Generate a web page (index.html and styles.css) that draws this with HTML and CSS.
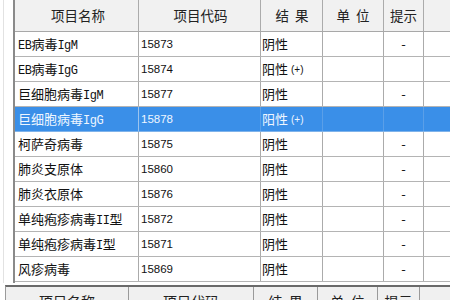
FILE: index.html
```html
<!DOCTYPE html>
<html lang="zh">
<head>
<meta charset="utf-8">
<link rel="stylesheet" href="styles.css">
</head>
<body>
<div class="top">
  <div class="gutter"></div>
  <div class="table">
    <div class="row head">
      <div class="c c1">项目名称</div>
      <div class="c c2">项目代码</div>
      <div class="c c3">结&nbsp;&nbsp;果</div>
      <div class="c c4">单&nbsp;&nbsp;位</div>
      <div class="c c5">提示</div>
      <div class="c c6"></div>
    </div>
    <div class="row">
      <div class="c c1"><span class="lat">EB</span>病毒<span class="lat">IgM</span></div>
      <div class="c c2 num">15873</div>
      <div class="c c3">阴性</div>
      <div class="c c4"></div>
      <div class="c c5">-</div>
      <div class="c c6"></div>
    </div>
    <div class="row">
      <div class="c c1"><span class="lat">EB</span>病毒<span class="lat">IgG</span></div>
      <div class="c c2 num">15874</div>
      <div class="c c3">阳性<span class="plus">(+)</span></div>
      <div class="c c4"></div>
      <div class="c c5"></div>
      <div class="c c6"></div>
    </div>
    <div class="row">
      <div class="c c1">巨细胞病毒<span class="lat">IgM</span></div>
      <div class="c c2 num">15877</div>
      <div class="c c3">阴性</div>
      <div class="c c4"></div>
      <div class="c c5">-</div>
      <div class="c c6"></div>
    </div>
    <div class="row sel">
      <div class="c c1">巨细胞病毒<span class="lat">IgG</span></div>
      <div class="c c2 num">15878</div>
      <div class="c c3">阳性<span class="plus">(+)</span></div>
      <div class="c c4"></div>
      <div class="c c5"></div>
      <div class="c c6"></div>
    </div>
    <div class="row">
      <div class="c c1">柯萨奇病毒</div>
      <div class="c c2 num">15875</div>
      <div class="c c3">阴性</div>
      <div class="c c4"></div>
      <div class="c c5">-</div>
      <div class="c c6"></div>
    </div>
    <div class="row">
      <div class="c c1">肺炎支原体</div>
      <div class="c c2 num">15860</div>
      <div class="c c3">阴性</div>
      <div class="c c4"></div>
      <div class="c c5">-</div>
      <div class="c c6"></div>
    </div>
    <div class="row">
      <div class="c c1">肺炎衣原体</div>
      <div class="c c2 num">15876</div>
      <div class="c c3">阴性</div>
      <div class="c c4"></div>
      <div class="c c5">-</div>
      <div class="c c6"></div>
    </div>
    <div class="row">
      <div class="c c1">单纯疱疹病毒<span class="lat">II</span>型</div>
      <div class="c c2 num">15872</div>
      <div class="c c3">阴性</div>
      <div class="c c4"></div>
      <div class="c c5">-</div>
      <div class="c c6"></div>
    </div>
    <div class="row">
      <div class="c c1">单纯疱疹病毒<span class="lat">I</span>型</div>
      <div class="c c2 num">15871</div>
      <div class="c c3">阴性</div>
      <div class="c c4"></div>
      <div class="c c5">-</div>
      <div class="c c6"></div>
    </div>
    <div class="row">
      <div class="c c1">风疹病毒</div>
      <div class="c c2 num">15869</div>
      <div class="c c3">阴性</div>
      <div class="c c4"></div>
      <div class="c c5">-</div>
      <div class="c c6"></div>
    </div>
  </div>
</div>
<div class="foot">
  <div class="f f1">项目名称</div>
  <div class="f f2">项目代码</div>
  <div class="f f3">结&nbsp;&nbsp;果</div>
  <div class="f f4">单&nbsp;&nbsp;位</div>
  <div class="f f5">提示</div>
  <div class="f f6"></div>
</div>
</body>
</html>
```

FILE: styles.css
```css
* { box-sizing: border-box; }
html, body {
  margin: 0;
  padding: 0;
  width: 450px;
  height: 300px;
  overflow: hidden;
  background: #ffffff;
  font-family: "Noto Sans CJK SC", "Noto Sans", sans-serif;
  color: #111;
}
.top {
  display: flex;
  height: 283px;
}
.gutter {
  width: 13px;
  border-left: 3px solid #fff;
}
.gutter::before {
  content: "";
  display: block;
  width: 1px;
  height: 100%;
  background: #e2e2e2;
}
.table {
  flex: 1;
  border-left: 2px solid #8a8a8a;
  display: flex;
  flex-direction: column;
}
.row {
  display: grid;
  grid-template-columns: 124px 122px 62px 61px 40px 1fr;
  height: 25px;
  border-bottom: 1px solid #b4b4b4;
}
.row.head {
  height: 32px;
  background: #f1f1f1;
  border-bottom: 1px solid #a8a8a8;
}
.c {
  border-right: 1px solid #ababab;
  font-size: 13px;
  line-height: 24px;
  white-space: nowrap;
  overflow: hidden;
}
.c6 { border-right: none; }
.head .c {
  text-align: center;
  font-size: 13.5px;
  line-height: 31px;
  color: #222;
}
.c1 { padding-left: 3px; }
.c2 { padding-left: 2px; }
.c3 { padding-left: 1px; }
.c5 { text-align: center; }
.num {
  font-family: "Liberation Sans", Arial, sans-serif;
  font-size: 11.5px;
}
.lat {
  font-family: "Liberation Mono", monospace;
  font-size: 12px;
  letter-spacing: -0.5px;
}
.plus {
  font-family: "Liberation Sans", Arial, sans-serif;
  font-size: 10px;
  margin-left: 3px;
  vertical-align: 1px;
}
.row.sel {
  background: #3a8fe8;
  border-bottom-color: #7fb3ea;
}
.row.sel .c {
  color: #eef6ff;
  border-right-color: #5a9fe8;
}
.row.sel .c1 { border-right-color: #9cc4ee; }
.foot {
  margin-left: 5px;
  margin-top: 2px;
  display: grid;
  grid-template-columns: 123px 125px 64px 60px 42px 1fr;
  height: 20px;
  background: #f0f0f0;
  border-top: 2px solid #6a6a6a;
  border-left: 1px solid #9a9a9a;
}
.f {
  border-right: 1px solid #9a9a9a;
  text-align: center;
  font-size: 14px;
  line-height: 14px;
  padding-top: 7px;
  color: #222;
  white-space: nowrap;
  overflow: hidden;
}
.f6 { border-right: none; }
```
